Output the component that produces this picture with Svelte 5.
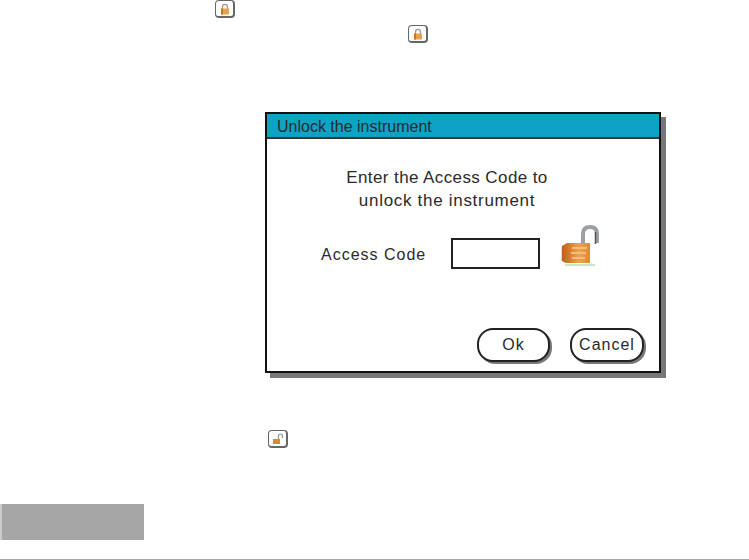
<script>
    let code = "";
</script>

{#snippet closedLock()}
    <svg viewBox="0 0 12 12" width="12" height="12">
        <path d="M3.5 6V3.8C3.5 2.2 4.6 1.3 6 1.3S8.5 2.2 8.5 3.8V6" fill="none" stroke="#a89a8a" stroke-width="1.3" />
        <rect x="2" y="5.5" width="8" height="6" fill="#e8a050" />
        <rect x="2" y="5.5" width="2" height="6" fill="#c9752a" />
    </svg>
{/snippet}

<div class="page">
    <div class="row first">
        <span class="key">{@render closedLock()}</span>
    </div>
    <div class="row second">
        <span class="key">{@render closedLock()}</span>
    </div>

    <div class="dialog">
        <div class="title">Unlock the instrument</div>
        <div class="body">
            <p class="prompt">Enter the Access Code to<br /><span class="wide">unlock the instrument</span></p>
            <div class="field">
                <label for="code">Access Code</label>
                <input id="code" type="text" bind:value={code} />
                <svg class="lock" viewBox="0 0 40 42" width="40" height="42">
                    <defs>
                        <linearGradient id="brass" x1="0" x2="1" y1="0" y2="0">
                            <stop offset="0" stop-color="#b9601c" />
                            <stop offset="0.3" stop-color="#d9802c" />
                            <stop offset="0.6" stop-color="#eda552" />
                            <stop offset="1" stop-color="#d98a35" />
                        </linearGradient>
                    </defs>
                    <path d="M23 20V9C23 4 26 2 30 2S37 4 37 9V18" fill="none" stroke="#9aa0a4" stroke-width="4" />
                    <path d="M35.5 7V19" stroke="#50565a" stroke-width="1.5" />
                    <path d="M2 21L7 18H30V38H6L2 36Z" fill="url(#brass)" />
                    <path d="M12 23H27M11 28H26M12 33H25" stroke="#f2bd78" stroke-width="2" />
                    <path d="M5 40H35" stroke="#b9dcb6" stroke-width="1.5" />
                    <path d="M1.5 22V36" stroke="#cfe6cb" stroke-width="1" />
                </svg>
            </div>
            <div class="actions">
                <button class="ok">Ok</button>
                <button class="cancel">Cancel</button>
            </div>
        </div>
    </div>

    <div class="row third">
        <span class="key">
            <svg viewBox="0 0 12 12" width="12" height="12">
                <path d="M6.5 6V3C6.5 1.7 7.4 1 8.5 1S10.5 1.7 10.5 3V5" fill="none" stroke="#8d9296" stroke-width="1.2" />
                <rect x="1" y="6" width="7" height="5" fill="#d98a35" />
            </svg>
        </span>
    </div>

    <div class="tab"></div>
    <div class="rule"></div>
</div>

<style>
    :global(body) {
        background: #fff;
    }

    .page {
        width: 749px;
        height: 560px;
        display: flex;
        flex-direction: column;
        font-family: "Liberation Sans", Arial, sans-serif;
        color: #2a2a2a;
        overflow: hidden;
    }

    .row {
        display: flex;
    }

    .first {
        padding-left: 215px;
    }

    .second {
        padding-left: 408px;
        margin-top: 7px;
    }

    .third {
        padding-left: 268px;
        margin-top: 57px;
    }

    .key {
        width: 20px;
        height: 18px;
        box-sizing: border-box;
        border: 1px solid #666;
        border-right-width: 2px;
        border-bottom-width: 2px;
        border-radius: 4px;
        display: flex;
        align-items: center;
        justify-content: center;
    }

    .key svg,
    .lock {
        filter: blur(0.5px);
    }

    .dialog {
        width: 396px;
        height: 261px;
        box-sizing: border-box;
        margin: 69px 0 0 265px;
        border: 2px solid #111;
        background: #fff;
        box-shadow: 5px 5px 0 #777;
        display: flex;
        flex-direction: column;
    }

    .title {
        height: 25px;
        box-sizing: border-box;
        background: #0ca3c6;
        border-bottom: 2px solid #2a3a40;
        padding: 1px 0 0 10px;
        font-size: 16px;
        line-height: 23px;
    }

    .body {
        flex: 1;
        display: flex;
        flex-direction: column;
    }

    .prompt {
        margin: 27px 32px 0 0;
        text-align: center;
        font-size: 17px;
        line-height: 23px;
        letter-spacing: 0.4px;
    }

    .wide {
        letter-spacing: 0.7px;
    }

    .field {
        display: flex;
        align-items: flex-start;
        margin-top: 26px;
        padding-left: 54px;
        font-size: 16px;
        letter-spacing: 1px;
    }

    .field label {
        line-height: 31px;
        margin-top: 1px;
    }

    .field input {
        width: 89px;
        height: 31px;
        box-sizing: border-box;
        border: 2px solid #222;
        margin-left: 25px;
        padding: 0;
        background: #fff;
    }

    .lock {
        margin: -13px 0 0 20px;
    }

    .actions {
        margin-top: auto;
        padding: 0 15px 9px 0;
        display: flex;
        justify-content: flex-end;
        gap: 20px;
    }

    .actions button {
        height: 34px;
        box-sizing: border-box;
        background: #fff;
        border: 2px solid #222;
        border-radius: 16px;
        box-shadow: 2px 2px 0 #777;
        font: inherit;
        font-size: 16px;
        letter-spacing: 1px;
        color: #2a2a2a;
        padding: 0;
    }

    .ok {
        width: 73px;
    }

    .cancel {
        width: 74px;
    }

    .tab {
        width: 144px;
        height: 36px;
        margin-top: 56px;
        background: #a6a6a6;
        border-left: 2px solid #ccc;
        box-sizing: border-box;
    }

    .rule {
        margin-top: auto;
        height: 1px;
        background: #aaa;
    }
</style>
